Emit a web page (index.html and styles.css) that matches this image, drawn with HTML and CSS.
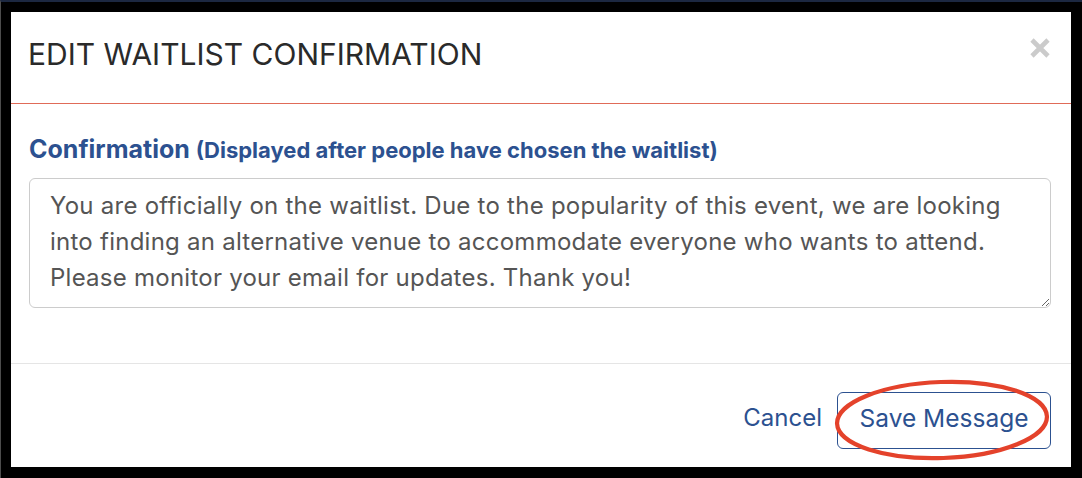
FILE: index.html
```html
<!DOCTYPE html>
<html lang="en">
<head>
<meta charset="utf-8">
<title>Edit Waitlist Confirmation</title>
<link rel="stylesheet" href="styles.css">
</head>
<body>
<div class="modal">
  <div class="modal-header">
    <h4 class="modal-title">EDIT WAITLIST CONFIRMATION</h4>
    <button class="close" type="button" aria-label="Close">
      <svg width="20" height="20" viewBox="0 0 20 20"><path d="M2 2 L18 18 M18 2 L2 18" stroke="#cbcbcb" stroke-width="4.6" fill="none"/></svg>
    </button>
  </div>
  <div class="modal-body">
    <label class="field-label" for="msg">Confirmation <span class="hint">(Displayed after people have chosen the waitlist)</span></label>
    <textarea id="msg" class="field">You are officially on the waitlist. Due to the popularity of this event, we are looking into finding an alternative venue to accommodate everyone who wants to attend. Please monitor your email for updates. Thank you!</textarea>
  </div>
  <div class="modal-footer">
    <a class="btn-link" href="#">Cancel</a>
    <button class="btn-save" type="button">Save Message</button>
    <svg class="annotation" width="220" height="86" viewBox="0 0 220 86"><ellipse cx="110" cy="43" rx="105" ry="38" fill="none" stroke="#e4422b" stroke-width="4.2" transform="rotate(-2 110 43)"/></svg>
  </div>
</div>
</body>
</html>
```
FILE: styles.css
```css
html, body {
  margin: 0;
  background: #000;
}
body {
  border-top: 2px solid #1c2841;
  border-left: 1px solid #4d4d4d;
  padding: 10px 11px 11px 10px;
  font-family: Inter, "Liberation Sans", sans-serif;
}
.modal {
  background: #fff;
  height: 455px;
  display: flex;
  flex-direction: column;
}
.modal-header {
  display: flex;
  justify-content: space-between;
  align-items: flex-start;
  padding: 24px 21px 31px 17px;
  border-bottom: 1px solid #e06b58;
}
.modal-title {
  margin: 0;
  font-size: 30px;
  line-height: 36px;
  font-weight: 400;
  color: #2a2a2a;
}
.close {
  border: 0;
  background: none;
  padding: 0;
  margin-top: 2px;
  width: 20px;
  height: 20px;
  display: block;
}
.close svg { display: block; }
.modal-body {
  padding: 30px 20px 55px 18px;
  display: flex;
  flex-direction: column;
}
.field-label {
  font-size: 25px;
  line-height: 30px;
  font-weight: 700;
  color: #2c5190;
  margin-bottom: 13px;
}
.hint {
  font-size: 22px;
}
.field {
  box-sizing: border-box;
  height: 130px;
  width: 100%;
  border: 1px solid #ccc;
  border-radius: 6px;
  padding: 9px 20px 10px;
  font-family: Inter, "Liberation Sans", sans-serif;
  font-size: 24px;
  letter-spacing: 0.25px;
  line-height: 36px;
  color: #555;
  resize: vertical;
  margin: 0;
}
.modal-footer {
  position: relative;
  flex: 1;
  border-top: 1px solid #e5e5e5;
  padding: 28px 20px 19px;
  display: flex;
  justify-content: flex-end;
  align-items: flex-start;
}
.btn-link {
  color: #2c5190;
  text-decoration: none;
  font-size: 24px;
  line-height: 51px;
  margin-right: 15px;
}
.btn-save {
  box-sizing: border-box;
  height: 57px;
  width: 214px;
  border: 1px solid #2c5190;
  border-radius: 6px;
  background: #fff;
  color: #2c5190;
  font-family: Inter, "Liberation Sans", sans-serif;
  font-size: 24.5px;
  padding: 0 0 6px;
}
.annotation {
  position: absolute;
  right: 19px;
  top: 13px;
}
```
